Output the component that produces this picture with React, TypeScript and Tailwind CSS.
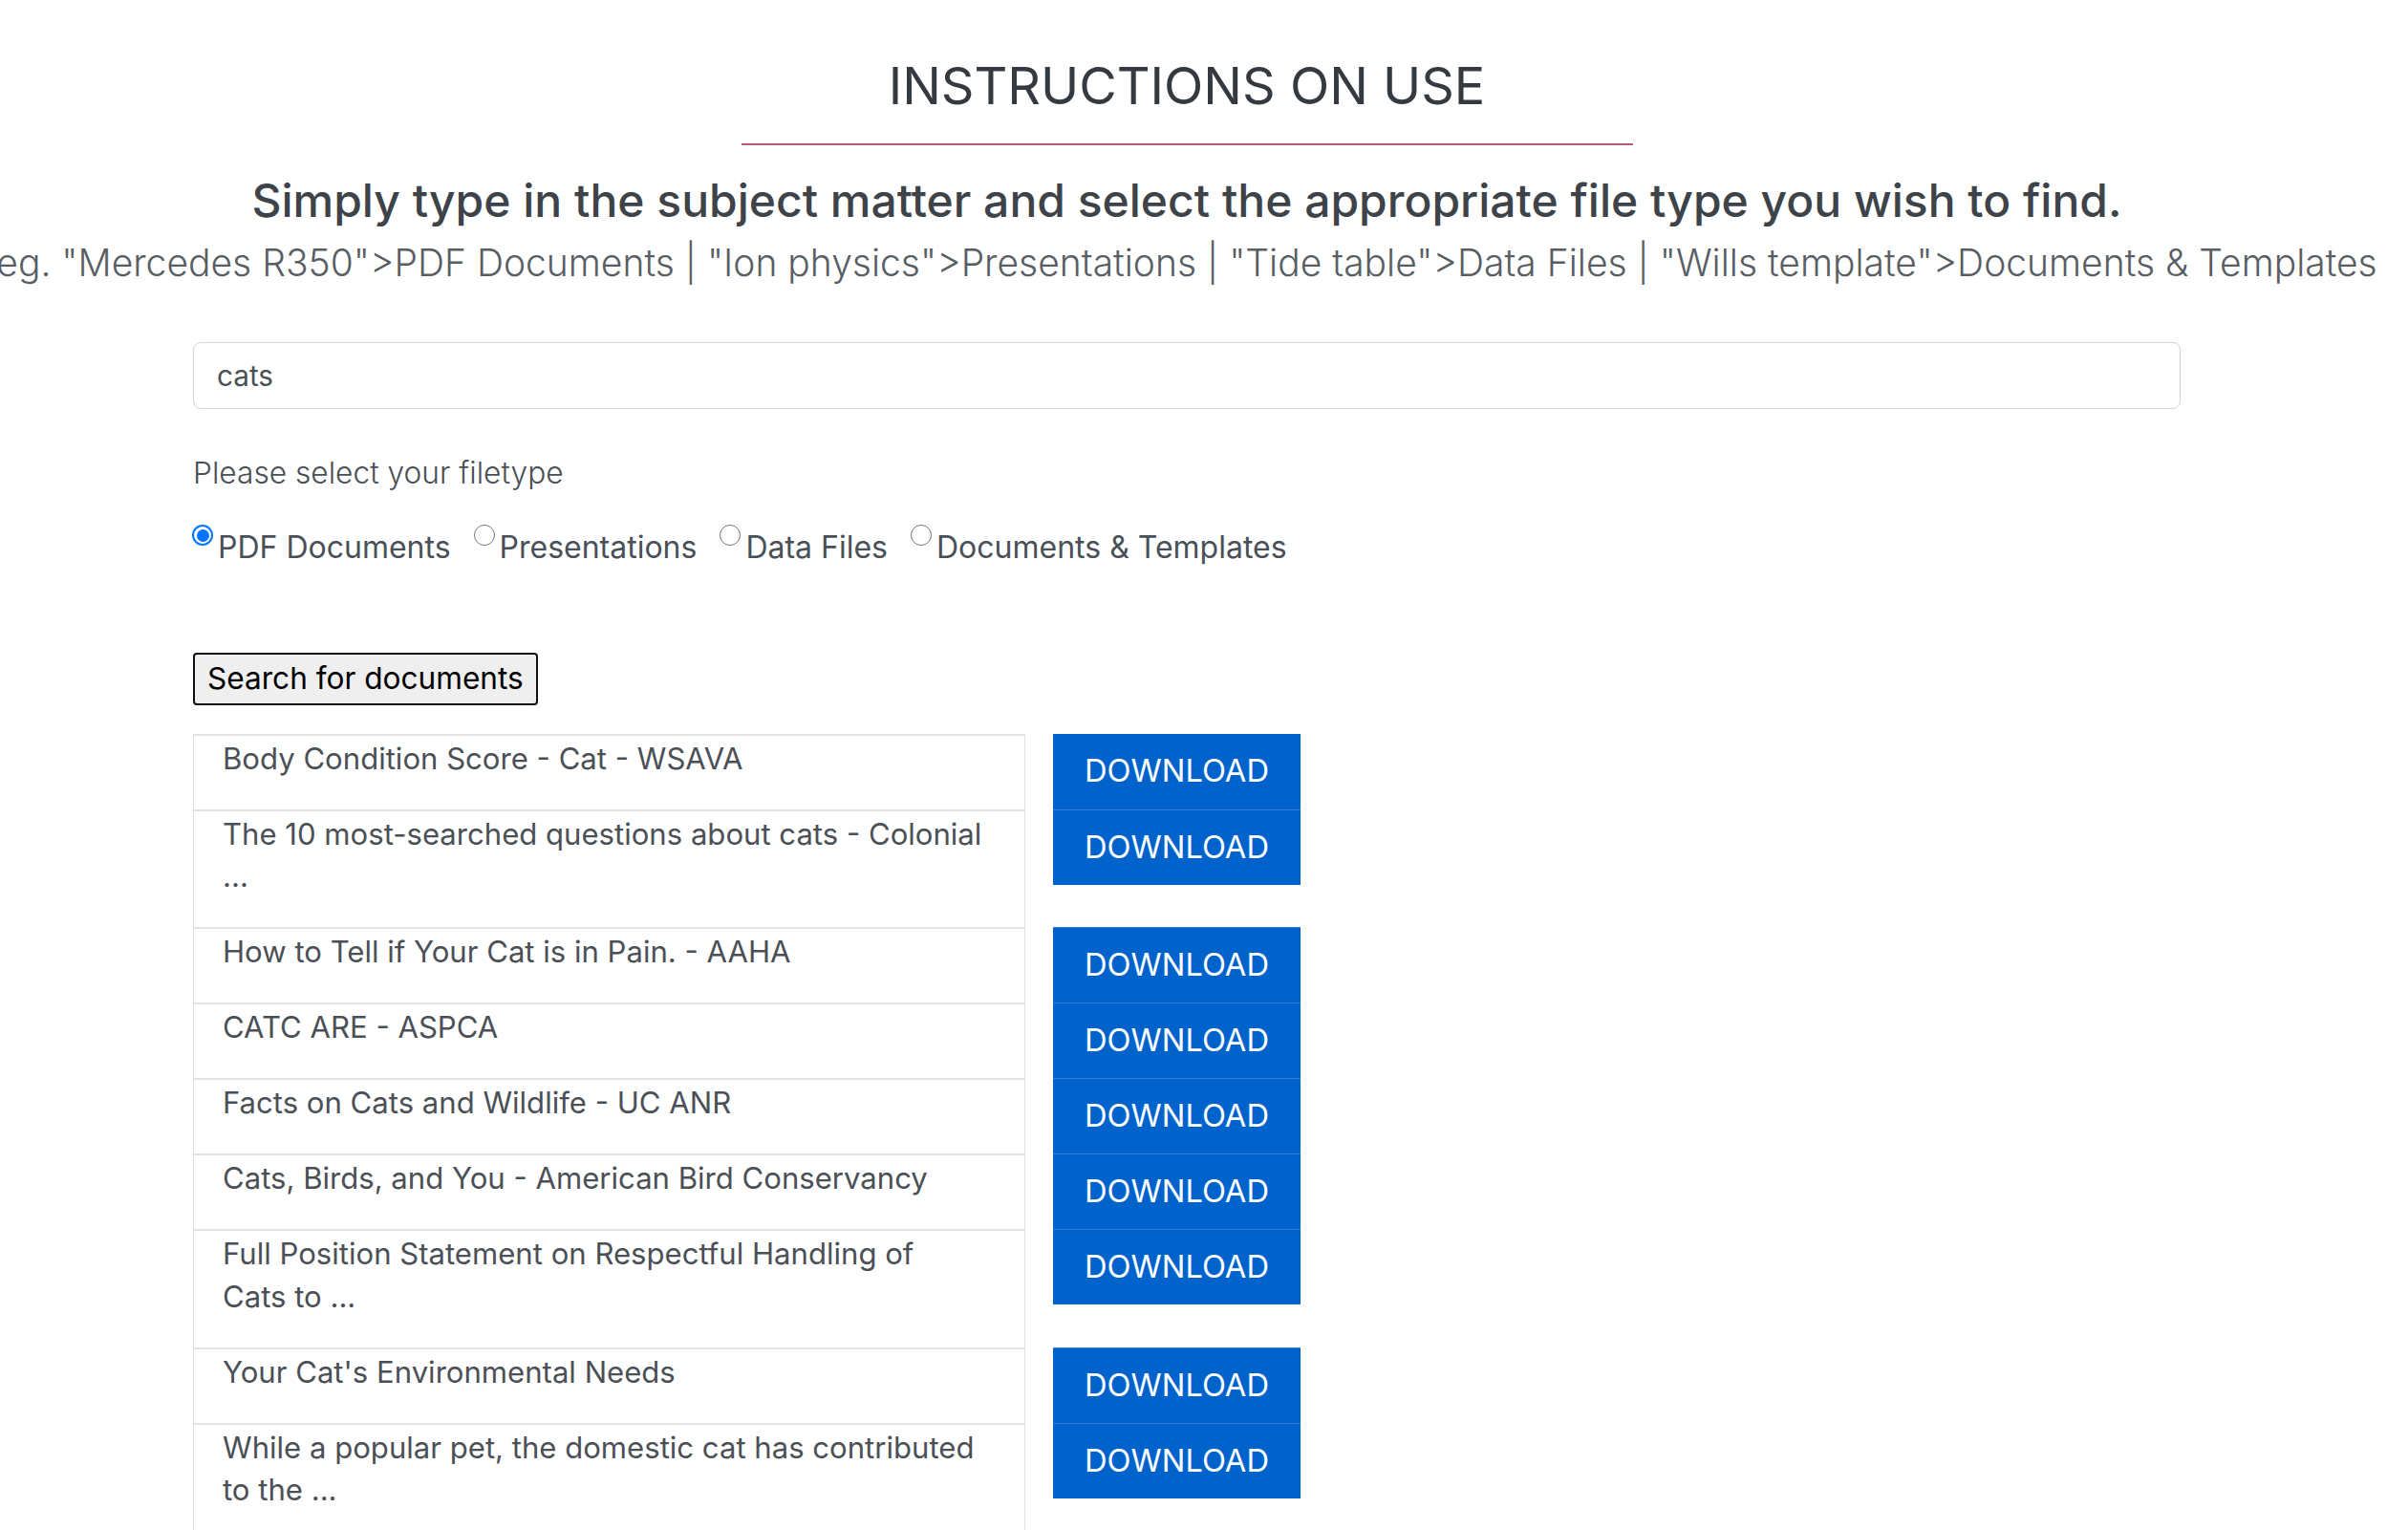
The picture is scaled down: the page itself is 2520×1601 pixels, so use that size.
import React from "react";

const rows: { lines: string[] }[] = [
  { lines: ["Body Condition Score - Cat - WSAVA"] },
  { lines: ["The 10 most-searched questions about cats - Colonial", "..."] },
  { lines: ["How to Tell if Your Cat is in Pain. - AAHA"] },
  { lines: ["CATC ARE - ASPCA"] },
  { lines: ["Facts on Cats and Wildlife - UC ANR"] },
  { lines: ["Cats, Birds, and You - American Bird Conservancy"] },
  { lines: ["Full Position Statement on Respectful Handling of", "Cats to ..."] },
  { lines: ["Your Cat's Environmental Needs"] },
  { lines: ["While a popular pet, the domestic cat has contributed", "to the ..."] },
];

function Radio({ checked }: { checked?: boolean }) {
  if (checked) {
    return (
      <span className="mt-[1.5px] flex h-[22px] w-[22px] shrink-0 items-center justify-center rounded-full bg-[#0075ff]">
        <span className="flex h-[18px] w-[18px] items-center justify-center rounded-full bg-white">
          <span className="h-[13px] w-[13px] rounded-full bg-[#0075ff]" />
        </span>
      </span>
    );
  }
  return <span className="mt-[1.5px] h-[22px] w-[22px] shrink-0 rounded-full border-[1.5px] border-[#767676] bg-white" />;
}

const options = [
  { label: "PDF Documents", checked: true },
  { label: "Presentations" },
  { label: "Data Files" },
  { label: "Documents & Templates" },
];

export default function App() {
  return (
    <div className="min-h-screen overflow-hidden bg-white font-['Inter',sans-serif]">
      <div className="w-[2484px]">
        <h1 className="pt-[57px] text-center text-[54px] font-normal leading-[65px] text-[#343a40]">
          INSTRUCTIONS ON USE
        </h1>
        <div className="mx-auto mt-[28px] h-[2px] w-[933px] bg-[#b9557a]" />
        <h2 className="mt-[29px] text-center text-[48px] font-medium leading-[58px] text-[#3d4349]">
          Simply type in the subject matter and select the appropriate file type you wish to find.
        </h2>
        <div className="mt-[12px] flex justify-center">
          <p className="whitespace-nowrap text-[39px] font-light leading-[47px] text-[#585e64]">
            eg. "Mercedes R350"&gt;PDF Documents | "Ion physics"&gt;Presentations | "Tide table"&gt;Data Files | "Wills template"&gt;Documents &amp; Templates
          </p>
        </div>

        <div className="ml-[202px] w-[2080px]">
          <div className="mt-[60px] flex h-[70px] items-center rounded-[8px] border border-[#ced4da] px-[24px] text-[29.7px] text-[#495057]">
            cats
          </div>

          <p className="mt-[43px] text-[31.7px] font-light leading-[47.5px] text-[#4a4f55]">
            Please select your filetype
          </p>

          <div className="mt-[29px] -ml-[1px] flex items-start text-[32px] leading-[49px] text-[#495057]">
            {options.map((o) => (
              <label key={o.label} className="mr-[24px] flex items-start">
                <Radio checked={o.checked} />
                <span className="ml-[5px]">{o.label}</span>
              </label>
            ))}
          </div>

          <button className="mt-[86px] flex h-[55px] items-center rounded-[4px] border-2 border-[#111] bg-[#efefef] px-[13px] text-[31.6px] text-black">
            Search for documents
          </button>

          <div className="mt-[30px] grid w-[1159px] grid-cols-[871px_259px] gap-x-[29px]">
            {rows.map((r, i) => (
              <React.Fragment key={i}>
                <div className="border-x border-t-2 border-x-[#dedede] border-t-[#e3e3e3] pb-[30.5px] pl-[30px] pr-[20px] pt-[2px] text-[31.1px] leading-[44.5px] text-[#4b5057]">
                  {r.lines.map((l, j) => (
                    <div key={j}>{l}</div>
                  ))}
                </div>
                <div className="self-start">
                  <div
                    className={
                      "flex h-[79px] items-center justify-center bg-[#0063cc] text-[32.7px] text-white" +
                      (i === 0 ? "" : " border-t border-t-[#2e7ed6]")
                    }
                  >
                    DOWNLOAD
                  </div>
                </div>
              </React.Fragment>
            ))}
          </div>
        </div>
      </div>
    </div>
  );
}
